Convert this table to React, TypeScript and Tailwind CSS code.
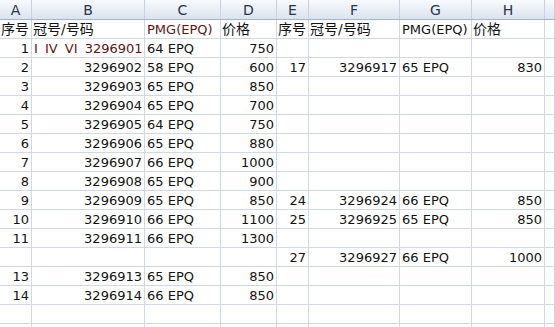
import React from 'react';

type Cell = { v: string; align?: 'l' | 'r'; red?: boolean; cjk?: boolean; wide?: boolean };

const cols = ['A', 'B', 'C', 'D', 'E', 'F', 'G', 'H', ''];
const widths = ['w-[32px]', 'w-[113px]', 'w-[76px]', 'w-[56px]', 'w-[32px]', 'w-[91px]', 'w-[72px]', 'w-[73px]', 'flex-1'];

const L = (v: string, red = false): Cell => ({ v, align: 'l', red });
const R = (v: string): Cell => ({ v, align: 'r' });
const C = (v: string): Cell => ({ v, align: 'l', cjk: true });
const E: Cell = { v: '' };

const left = (n: string, code: string, pmg: string, price: string): Cell[] => [R(n), R(code), L(pmg), R(price)];
const blank4: Cell[] = [E, E, E, E];

const rows: Cell[][] = [
  [C('序号'), C('冠号/号码'), L('PMG(EPQ)', true), C('价格'), C('序号'), C('冠号/号码'), L('PMG(EPQ)'), C('价格'), E],
  [R('1'), { v: 'I IV VI 3296901', align: 'l', red: true, wide: true }, L('64 EPQ'), R('750'), ...blank4, E],
  [...left('2', '3296902', '58 EPQ', '600'), ...left('17', '3296917', '65 EPQ', '830'), E],
  [...left('3', '3296903', '65 EPQ', '850'), ...blank4, E],
  [...left('4', '3296904', '65 EPQ', '700'), ...blank4, E],
  [...left('5', '3296905', '64 EPQ', '750'), ...blank4, E],
  [...left('6', '3296906', '65 EPQ', '880'), ...blank4, E],
  [...left('7', '3296907', '66 EPQ', '1000'), ...blank4, E],
  [...left('8', '3296908', '65 EPQ', '900'), ...blank4, E],
  [...left('9', '3296909', '65 EPQ', '850'), ...left('24', '3296924', '66 EPQ', '850'), E],
  [...left('10', '3296910', '66 EPQ', '1100'), ...left('25', '3296925', '65 EPQ', '850'), E],
  [...left('11', '3296911', '66 EPQ', '1300'), ...blank4, E],
  [...blank4, ...left('27', '3296927', '66 EPQ', '1000'), E],
  [...left('13', '3296913', '65 EPQ', '850'), ...blank4, E],
  [...left('14', '3296914', '66 EPQ', '850'), ...blank4, E],
  [...blank4, ...blank4, E],
  [...blank4, ...blank4, E],
];

export default function App() {
  return (
    <div
      className="w-[555px] h-[327px] overflow-hidden bg-white text-[13px] leading-none text-[#121212]"
      style={{ fontFamily: '"DejaVu Sans", "Noto Sans CJK SC", sans-serif' }}
    >
      <div className="flex h-[20px] bg-gradient-to-b from-[#f8fafd] to-[#dbe3ee] border-b border-[#9eb6ce]">
        {cols.map((c, i) => (
          <div
            key={i}
            className={`${widths[i]} shrink-0 flex items-center justify-center border-r border-[#c5d2e2] text-[14px] text-[#27344a]`}
          >
            {c}
          </div>
        ))}
      </div>
      {rows.map((row, r) => (
        <div key={r} className="flex h-[19px] border-b border-[#d0d7e5]">
          {row.map((cell, i) => (
            <div
              key={i}
              className={`${widths[i]} shrink-0 flex items-end pb-[2px] px-[2px] whitespace-nowrap overflow-visible border-r border-[#d0d7e5] ${
                cell.align === 'r' ? 'justify-end' : 'justify-start'
              } ${cell.red ? 'text-[#5e1414]' : ''} ${cell.cjk ? 'text-[14px] pl-[1px]' : ''} ${
                cell.wide ? '[word-spacing:3px]' : ''
              }`}
            >
              {cell.v}
            </div>
          ))}
        </div>
      ))}
    </div>
  );
}
